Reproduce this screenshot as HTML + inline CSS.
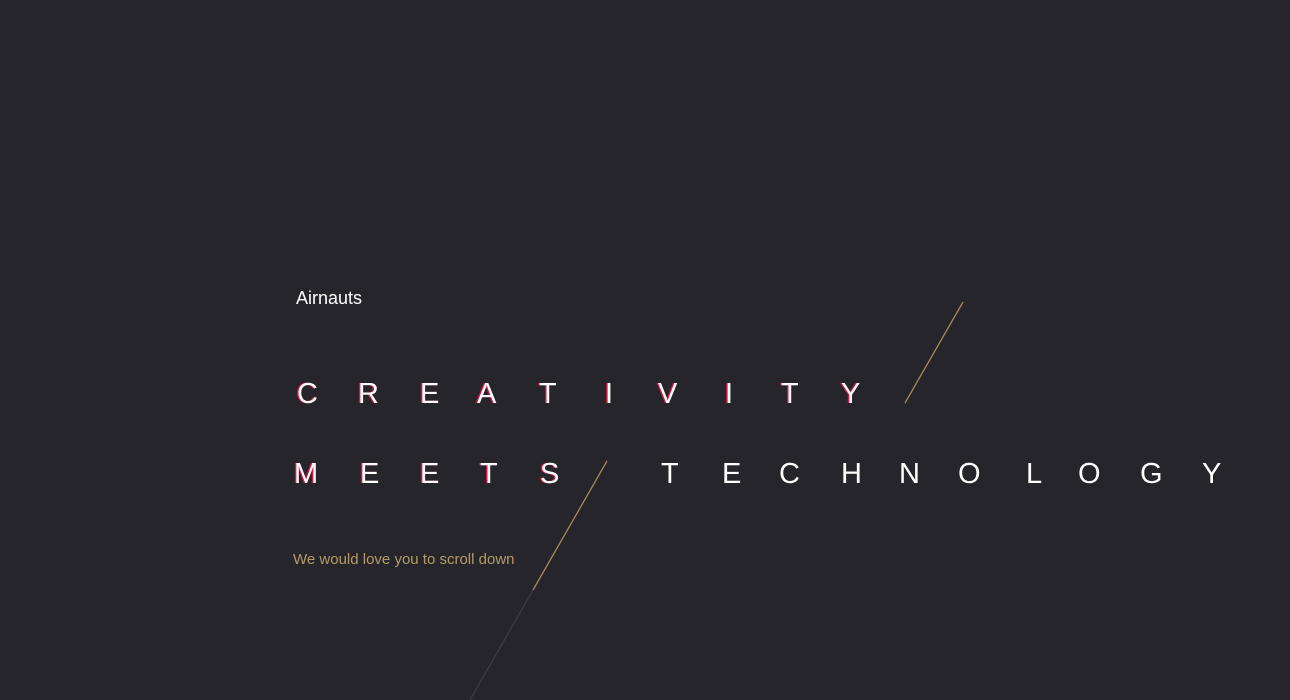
<!DOCTYPE html>
<html><head><meta charset="utf-8"><style>
html,body{margin:0;padding:0;}
body{width:1290px;height:700px;background:#26252b;position:relative;overflow:hidden;font-family:"Liberation Sans",sans-serif;}
.l{position:absolute;font-size:29px;line-height:1;color:#fff;}
.r{text-shadow:-1.5px 0 0 #e0103a;}
.t{font-weight:400;}
#brand{position:absolute;left:296px;top:288px;font-size:18px;color:#fff;}
#sub{position:absolute;left:293px;top:551px;font-size:15px;color:#b59a66;}
svg{position:absolute;left:0;top:0;}
</style></head><body>
<svg width="1290" height="700">
<line x1="963" y1="302" x2="905" y2="403" stroke="#a08a5c" stroke-width="1.3"/>
<line x1="607" y1="461" x2="533" y2="590" stroke="#a08a5c" stroke-width="1.3"/>
<line x1="533" y1="590" x2="470" y2="700" stroke="#3e3d44" stroke-width="1.2"/>
</svg>
<div id="brand">Airnauts</div>
<div id="sub">We would love you to scroll down</div>
<span class="l r" style="left:297px;top:380px">C</span>
<span class="l r" style="left:358px;top:380px">R</span>
<span class="l r" style="left:420px;top:380px">E</span>
<span class="l r" style="left:477px;top:380px">A</span>
<span class="l r" style="left:539px;top:380px">T</span>
<span class="l r" style="left:605px;top:380px">I</span>
<span class="l r" style="left:658px;top:380px">V</span>
<span class="l r" style="left:725px;top:380px">I</span>
<span class="l r" style="left:781px;top:380px">T</span>
<span class="l r" style="left:841px;top:380px">Y</span>
<span class="l r" style="left:294px;top:460px">M</span>
<span class="l r" style="left:360px;top:460px">E</span>
<span class="l r" style="left:420px;top:460px">E</span>
<span class="l r" style="left:480px;top:460px">T</span>
<span class="l r" style="left:540px;top:460px">S</span>
<span class="l t" style="left:661px;top:460px">T</span>
<span class="l t" style="left:722px;top:460px">E</span>
<span class="l t" style="left:779px;top:460px">C</span>
<span class="l t" style="left:841px;top:460px">H</span>
<span class="l t" style="left:899px;top:460px">N</span>
<span class="l t" style="left:958px;top:460px">O</span>
<span class="l t" style="left:1026px;top:460px">L</span>
<span class="l t" style="left:1078px;top:460px">O</span>
<span class="l t" style="left:1140px;top:460px">G</span>
<span class="l t" style="left:1202px;top:460px">Y</span>
</body></html>
